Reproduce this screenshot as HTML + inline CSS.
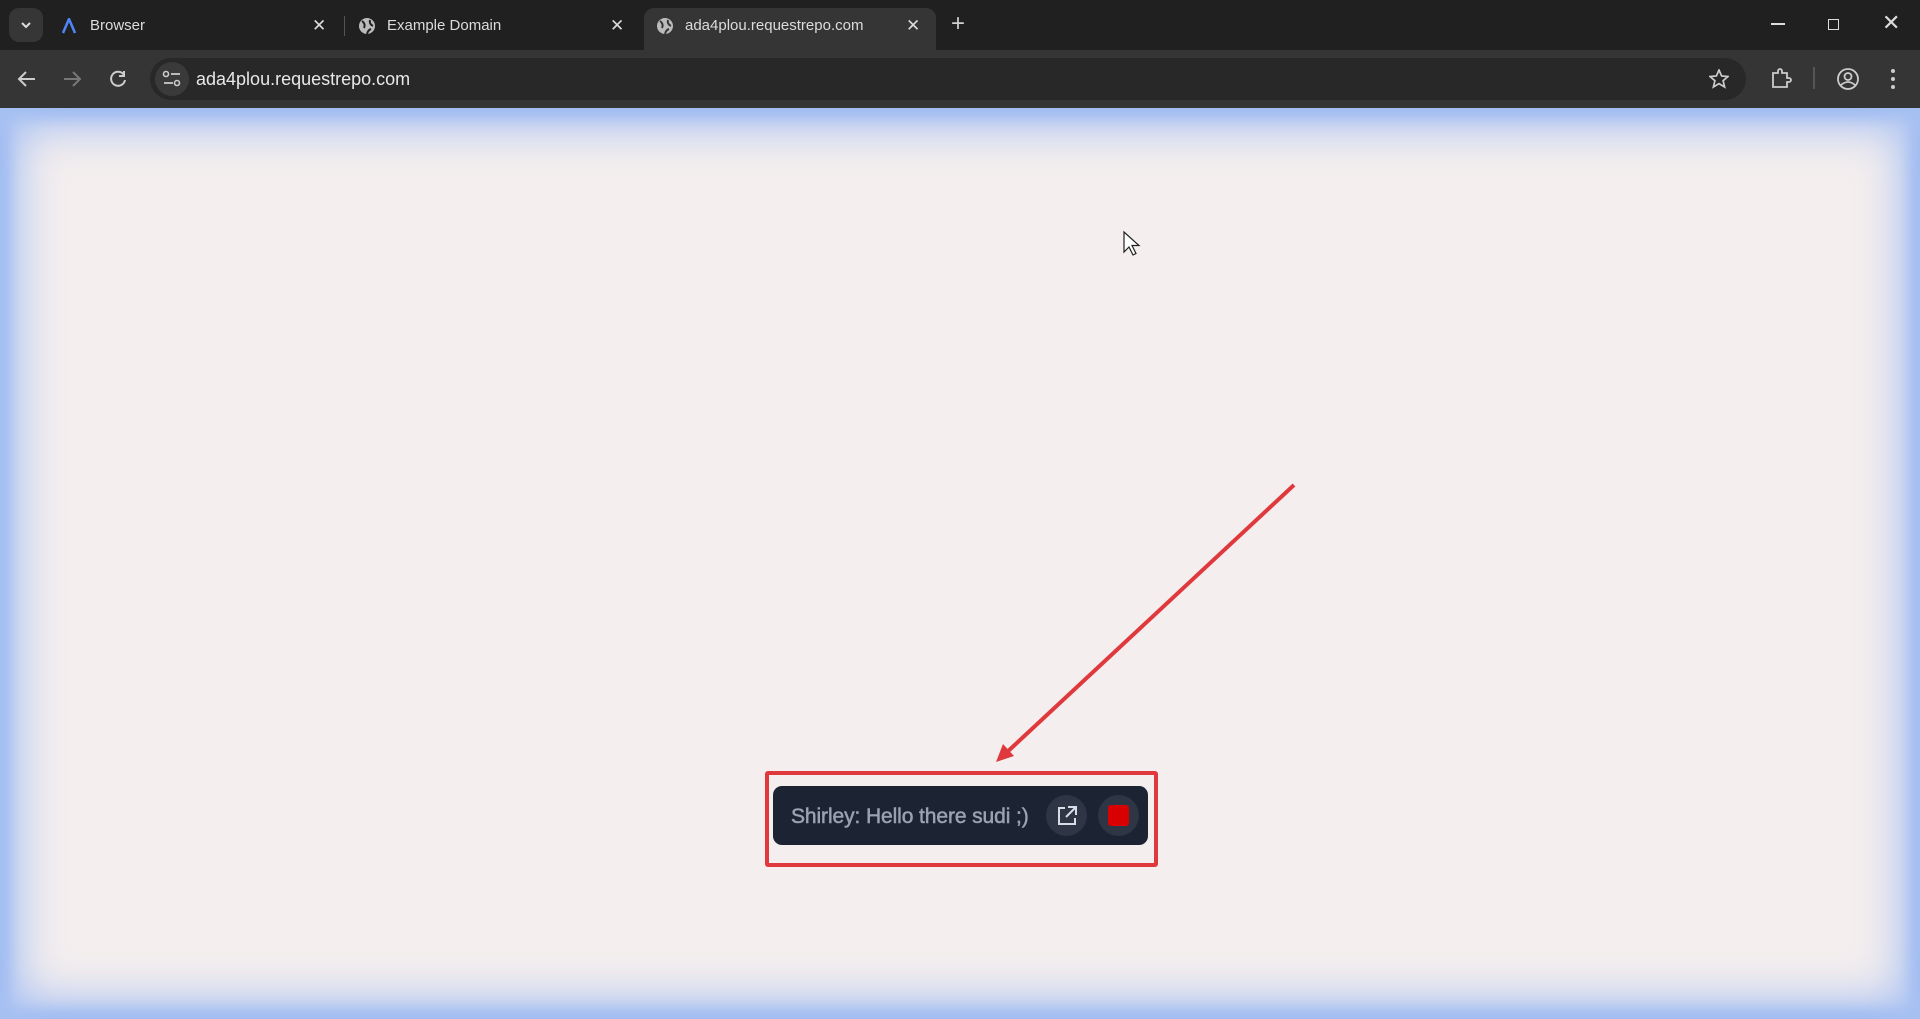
<!DOCTYPE html>
<html><head><style>
*{margin:0;padding:0;box-sizing:border-box}
body{width:1920px;height:1019px;overflow:hidden;background:#202020;font-family:"Liberation Sans",sans-serif;position:relative}
.tabbar{position:absolute;left:0;top:0;width:1920px;height:50px;background:#202020}
.tab{position:absolute;top:8px;height:42px;color:#dcdcdc;font-size:15px;line-height:36px}
.toolbar{position:absolute;top:50px;left:0;width:1920px;height:58px;background:#353535}
.addr{position:absolute;left:150px;top:8px;width:1596px;height:42px;border-radius:21px;background:#282828;color:#e8e8e8;font-size:18px;line-height:42px;padding-left:46px}
.content{position:absolute;top:108px;left:0;width:1920px;height:911px;background:#f4eeee;box-shadow:inset 0 0 44px 20px #a9c2f3, inset 0 0 14px 8px #7fa4ee}
.ic{position:absolute;color:#cfcfcf}
</style></head><body>
<div class="tabbar">
 <div style="position:absolute;left:9px;top:8px;width:34px;height:34px;border-radius:10px;background:#363636"></div>
 <svg class="ic" style="left:18px;top:18px" width="16" height="14"><path d="M4 5l4 4 4-4" stroke="#ddd" stroke-width="2" fill="none"/></svg>
 <div class="tab" style="left:60px;width:270px"><svg style="position:absolute;left:2px;top:10px" width="14" height="16"><path d="M1 15L7 1l6 14" stroke="#4f86f7" stroke-width="2.5" fill="none"/></svg><span style="position:absolute;left:30px">Browser</span><span style="position:absolute;left:252px;font-size:17px">✕</span></div>
 <div style="position:absolute;left:344px;top:16px;width:1px;height:20px;background:#555"></div>
 <div class="tab" style="left:356px;width:270px"><svg style="position:absolute;left:2px;top:9px" width="18" height="18"><circle cx="9" cy="9" r="8" fill="#bbb"/><path d="M4 4q4 3 2 7M12 3q-1 4 3 6M9 17q1-4 4-5" stroke="#202020" stroke-width="2" fill="none"/></svg><span style="position:absolute;left:31px">Example Domain</span><span style="position:absolute;left:254px;font-size:17px">✕</span></div>
 <div class="tab" style="left:644px;width:292px;background:#353535;border-radius:10px 10px 0 0"><svg style="position:absolute;left:12px;top:9px" width="18" height="18"><circle cx="9" cy="9" r="8" fill="#bbb"/><path d="M4 4q4 3 2 7M12 3q-1 4 3 6M9 17q1-4 4-5" stroke="#353535" stroke-width="2" fill="none"/></svg><span style="position:absolute;left:41px">ada4plou.requestrepo.com</span><span style="position:absolute;left:262px;font-size:17px">✕</span></div>
 <div class="ic" style="left:951px;top:10px;font-size:24px">+</div>
 <div style="position:absolute;left:1771px;top:23px;width:14px;height:1.5px;background:#ddd"></div>
 <div style="position:absolute;left:1828px;top:19px;width:11px;height:11px;border:1.5px solid #ddd"></div>
 <div class="ic" style="left:1882px;top:10px;font-size:22px;color:#ddd">✕</div>
</div>
<div class="toolbar">
 <svg class="ic" style="left:17px;top:20px" width="20" height="18"><path d="M18 9H3M9 2L2 9l7 7" stroke="#ccc" stroke-width="2" fill="none"/></svg>
 <svg class="ic" style="left:62px;top:20px" width="20" height="18"><path d="M2 9h15M11 2l7 7-7 7" stroke="#777" stroke-width="2" fill="none"/></svg>
 <svg class="ic" style="left:108px;top:19px" width="20" height="20"><path d="M16 6A7 7 0 1 0 17 11M16 2v5h-5" stroke="#ccc" stroke-width="2" fill="none"/></svg>
 <div class="addr">ada4plou.requestrepo.com
  <div style="position:absolute;left:5px;top:4px;width:34px;height:34px;border-radius:17px;background:#3a3a3a"></div>
  <svg style="position:absolute;left:12px;top:12px" width="20" height="18"><circle cx="4" cy="4" r="2.5" stroke="#ccc" fill="none" stroke-width="1.6"/><path d="M9 4h9M2 13h9" stroke="#ccc" stroke-width="1.8"/><circle cx="15" cy="13" r="2.5" stroke="#ccc" fill="none" stroke-width="1.6"/></svg>
  <svg style="position:absolute;left:1559px;top:11px" width="20" height="20"><path d="M10 1l2.6 6 6.4.5-4.9 4.2 1.5 6.3L10 14.6 4.4 18l1.5-6.3L1 7.5 7.4 7z" stroke="#ccc" stroke-width="1.7" fill="none"/></svg>
 </div>
 <svg class="ic" style="left:1771px;top:18px" width="22" height="22"><path d="M2 5h5v-2a2 2 0 0 1 4 0v2h5v5h2a2 2 0 0 1 0 4h-2v5H2z" stroke="#ccc" stroke-width="1.8" fill="none"/></svg>
 <div style="position:absolute;left:1813px;top:17px;width:1.5px;height:22px;background:#555"></div>
 <svg class="ic" style="left:1836px;top:17px" width="24" height="24"><circle cx="12" cy="12" r="10" stroke="#ccc" stroke-width="1.8" fill="none"/><circle cx="12" cy="9.5" r="3.5" stroke="#ccc" stroke-width="1.8" fill="none"/><path d="M5 18q7-6 14 0" stroke="#ccc" stroke-width="1.8" fill="none"/></svg>
 <svg class="ic" style="left:1889px;top:18px" width="8" height="22"><circle cx="4" cy="3" r="2" fill="#ccc"/><circle cx="4" cy="11" r="2" fill="#ccc"/><circle cx="4" cy="19" r="2" fill="#ccc"/></svg>
</div>
<div class="content"></div>
<svg style="position:absolute;left:0;top:0" width="1920" height="1019">
 <path d="M1294 485L1005 754" stroke="#e0393d" stroke-width="4" fill="none"/>
 <path d="M996 762l7-18 11 12z" fill="#e0393d"/>
 <path d="M1124 232v20l5-5 4 8 3-1.5-4-8 7 0z" fill="#fff" stroke="#222" stroke-width="1.2"/>
</svg>
<div style="position:absolute;left:765px;top:771px;width:393px;height:96px;border:4px solid #e0393d;border-radius:3px"></div>
<div style="position:absolute;left:773px;top:786px;width:375px;height:59px;background:#1c2333;border-radius:9px">
 <div style="position:absolute;left:18px;top:0;line-height:61px;font-size:21px;letter-spacing:-0.1px;color:#9aa2b2;font-family:'Liberation Sans',sans-serif;-webkit-text-stroke:0.5px #9aa2b2;white-space:nowrap">Shirley: Hello there sudi ;)</div>
 <div style="position:absolute;left:273px;top:9px;width:41px;height:41px;border-radius:21px;background:#2e3545"></div>
 <svg style="position:absolute;left:283px;top:19px" width="22" height="22"><path d="M9 3H3v16h16v-6M12 2h8v8M20 2l-10 10" stroke="#d8dce4" stroke-width="2" fill="none"/></svg>
 <div style="position:absolute;left:325px;top:9px;width:41px;height:41px;border-radius:21px;background:#2e3545"></div>
 <div style="position:absolute;left:335px;top:19px;width:21px;height:21px;border-radius:3px;background:#d80000"></div>
</div>
</body></html>
